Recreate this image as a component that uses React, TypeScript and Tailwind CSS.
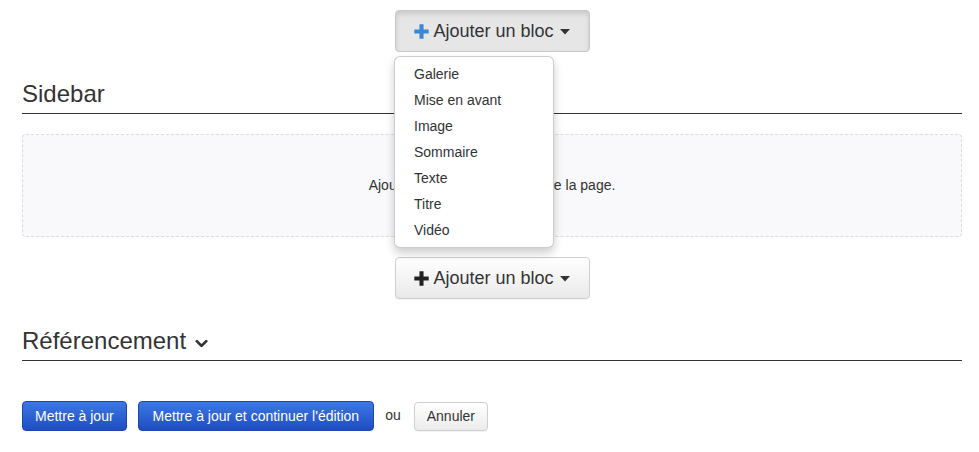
import { ChevronDown } from 'lucide-react'

const blocTypes = ['Galerie', 'Mise en avant', 'Image', 'Sommaire', 'Texte', 'Titre', 'Vidéo']

function Plus({ className }: { className?: string }) {
  return (
    <svg viewBox="0 0 14 14" width="15" height="15" className={className}>
      <path d="M5.1 0.3h3.8v4.8h4.8v3.8H8.9v4.8H5.1V8.9H0.3V5.1h4.8z" fill="currentColor" />
    </svg>
  )
}

function Caret() {
  return (
    <svg viewBox="0 0 10 6" width="10" height="6" className="ml-[6px] mt-[1px]">
      <path d="M0 0h10L5 5.5z" fill="#333" />
    </svg>
  )
}

function AddBlockButton({ open }: { open?: boolean }) {
  return (
    <button
      className={
        open
          ? 'flex h-[42px] w-[195px] items-center justify-center rounded-[4px] border border-[#c8c8c8] bg-[#e6e6e6] text-[18px] text-[#333] shadow-[inset_0_3px_5px_rgba(0,0,0,0.125)]'
          : 'flex h-[42px] w-[195px] items-center justify-center rounded-[4px] border border-[#cfcfcf] bg-linear-to-b from-white to-[#e9e9e9] text-[18px] text-[#333] shadow-[0_1px_1px_rgba(0,0,0,0.05)]'
      }
    >
      <Plus className={open ? 'mr-[4px] text-[#3a87d3]' : 'mr-[4px] text-[#222]'} />
      Ajouter un bloc
      <Caret />
    </button>
  )
}

export default function App() {
  return (
    <div className="min-h-[452px] bg-white px-[22px] pr-[17px] pt-[10px] font-['Liberation_Sans',Arial,sans-serif] text-[#333]">
      <div className="relative flex justify-center">
        <AddBlockButton open />
        <div className="absolute left-[372px] top-[46px] z-10 w-[160px] rounded-[6px] border border-black/20 bg-white py-[4px] shadow-[0_5px_10px_rgba(0,0,0,0.2)]">
          {blocTypes.map((t) => (
            <div key={t} className="flex h-[26px] items-center px-[19px] text-[14px] text-[#333]">
              {t}
            </div>
          ))}
        </div>
      </div>

      <h2 className="mt-[29px] border-b border-[#333] pb-[6px] text-[24px] leading-[26px]">Sidebar</h2>

      <div className="mt-[20px] flex h-[103px] items-center justify-center rounded-[4px] border border-dashed border-[#dcdcdc] bg-[#f9f8fa] text-[14px]">
        Ajoutez un bloc pour construire la page.
      </div>

      <div className="mt-[20px] flex justify-center">
        <AddBlockButton />
      </div>

      <h2 className="mt-[29px] flex items-center border-b border-[#333] pb-[6px] text-[24px] leading-[26px]">
        Référencement
        <ChevronDown size={19} strokeWidth={3.5} className="ml-[6px] mt-[5px] text-[#333]" />
      </h2>

      <div className="mt-[40px] flex items-center gap-[11px] text-[14px]">
        <button className="h-[30px] rounded-[4px] border border-[#1d45b3] bg-linear-to-b from-[#3d78e2] to-[#1f4cc4] px-[12px] text-white">
          Mettre à jour
        </button>
        <button className="h-[30px] rounded-[4px] border border-[#1d45b3] bg-linear-to-b from-[#3d78e2] to-[#1f4cc4] px-[14px] text-white">
          Mettre à jour et continuer l'édition
        </button>
        <span className="-mt-[2px]">ou</span>
        <button className="ml-[2px] h-[29px] rounded-[4px] border border-[#cfcfcf] bg-linear-to-b from-white to-[#ececec] px-[12px] text-[#333] shadow-[0_1px_1px_rgba(0,0,0,0.05)]">
          Annuler
        </button>
      </div>
    </div>
  )
}
